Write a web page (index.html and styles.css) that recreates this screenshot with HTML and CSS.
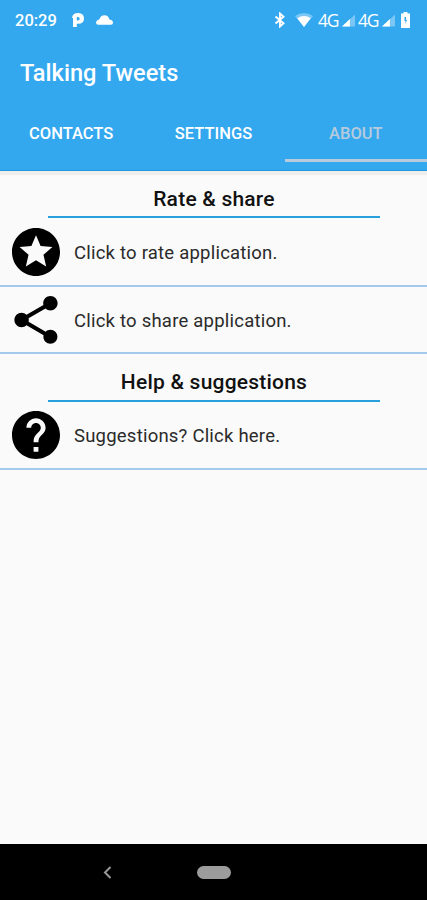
FILE: index.html
```html
<!DOCTYPE html>
<html lang="en">
<head>
  <meta charset="UTF-8">
  <meta name="viewport" content="width=device-width, initial-scale=1.0">
  <title>Talking Tweets</title>
  <link rel="stylesheet" href="styles.css">
</head>

<body>
  <div class="screen">
    <header class="app-bar">
      <div class="status-bar">
        <span class="clock">20:29</span>
        <svg class="icon-p" viewBox="0 0 12 14">
          <path fill-rule="evenodd" d="M0 5Q.5 0 6.200 0Q12 .3 12 5.500Q12 10.800 6 10.800H4.800V14H1V5ZM4.800 4V7.400H6A1.700 1.700 0 0 0 6 4Z"/>
        </svg>
        <svg class="icon-cloud" viewBox="0 0 18 10">
          <path d="M2.500 10Q0 10 0 7.600Q.3 5 3.300 4.600Q5 0 9 0Q13 0 14.300 4.500Q18 5 18 8Q18 10 15.800 10Z"/>
        </svg>
        <div class="status-icons">
          <svg class="icon-bluetooth" viewBox="0 0 12 16">
            <path d="M1.500 4.500L9.500 11.300L6 14.500V1.500L9.500 4.700L1.500 11.500" fill="none" stroke="currentColor" stroke-width="1.900"/>
          </svg>
          <svg class="icon-wifi" viewBox="0 0 18 14">
            <path d="M0 3Q9-3 18 3L9 14Z" opacity=".35"/>
            <path d="M2.300 5.200Q9 1 15.700 5.200L9 14Z"/>
          </svg>
          <span class="network">4G</span>
          <svg class="icon-signal" viewBox="0 0 14 13">
            <path d="M0 13L14 0V13Z" opacity=".35"/>
            <path d="M0 13L8.500 5V13Z"/>
          </svg>
          <span class="network">4G</span>
          <svg class="icon-signal" viewBox="0 0 14 13">
            <path d="M0 13L14 0V13Z" opacity=".35"/>
            <path d="M0 13L8.500 5V13Z"/>
          </svg>
          <svg class="icon-battery" viewBox="0 0 9 16">
            <path fill-rule="evenodd" d="M2.500 0h4v1.500H9V16H0V1.500h2.500ZM3.500 5v4h1V12L6 8H5V5Z"/>
          </svg>
        </div>
      </div>
      <h1 class="title">Talking Tweets</h1>
      <nav class="tabs">
        <a class="tab">CONTACTS</a>
        <a class="tab">SETTINGS</a>
        <a class="tab tab-active">ABOUT</a>
      </nav>
    </header>

    <main class="content">
      <h2 class="section-title">Rate &amp; share</h2>
      <div class="row">
        <svg class="row-icon" viewBox="2 2 20 20">
          <path d="M11.990 2C6.470 2 2 6.480 2 12s4.470 10 9.990 10C17.520 22 22 17.520 22 12S17.520 2 11.990 2zm4.240 16L12 15.450 7.770 18l1.120-4.810-3.730-3.230 4.920-.42L12 5l1.920 4.530 4.920.42-3.730 3.230L16.230 18z"/>
        </svg>
        <span class="row-text">Click to rate application.</span>
      </div>
      <div class="row row-share">
        <svg class="row-icon" viewBox="2 2 20 20">
          <path d="M18 16.080c-.76 0-1.440.3-1.960.77L8.910 12.700c.05-.23.09-.46.09-.7s-.04-.47-.09-.7l7.050-4.110c.54.5 1.250.81 2.040.81 1.660 0 3-1.340 3-3s-1.340-3-3-3-3 1.340-3 3c0 .24.04.47.09.7L8.040 9.810C7.500 9.310 6.790 9 6 9c-1.660 0-3 1.340-3 3s1.340 3 3 3c.79 0 1.500-.31 2.040-.81l7.120 4.160c-.05.21-.08.43-.08.65 0 1.610 1.310 2.920 2.920 2.920 1.610 0 2.920-1.310 2.920-2.920s-1.310-2.920-2.920-2.920z"/>
        </svg>
        <span class="row-text">Click to share application.</span>
      </div>
      <h2 class="section-title section-help">Help &amp; suggestions</h2>
      <div class="row row-help">
        <svg class="row-icon" viewBox="2 2 20 20">
          <path d="M12 2C6.480 2 2 6.480 2 12s4.480 10 10 10 10-4.480 10-10S17.520 2 12 2zm1 17h-2v-2h2v2zm2.070-7.750l-.9.920C13.450 12.900 13 13.500 13 15h-2v-.5c0-1.100.45-2.100 1.170-2.830l1.240-1.260c.37-.36.59-.86.59-1.410 0-1.100-.9-2-2-2s-2 .9-2 2H8c0-2.210 1.790-4 4-4s4 1.790 4 4c0 .88-.36 1.680-.93 2.250z" stroke="none"/>
        </svg>
        <span class="row-text">Suggestions? Click here.</span>
      </div>
    </main>

    <footer class="nav-bar">
      <svg class="nav-back" viewBox="0 0 9 13">
        <path d="M7.500 1L2 6.500L7.500 12" fill="none" stroke="currentColor" stroke-width="2"/>
      </svg>
      <span class="nav-home"></span>
    </footer>
  </div>
</body>
</html>
```

FILE: styles.css
```css
:root {
  --primary-color: #34a8ef;
  --primary-dark: #1e96dd;
  --bg-color: #fafafa;
  --divider-color: #a3c9ec;
  --tab-active: #b7cbdc;
}

* {
  margin: 0;
  padding: 0;
  box-sizing: border-box;
}

body {
  font-family: Roboto, "Liberation Sans", sans-serif;
  background-color: var(--bg-color);
  color: #111;
}

svg {
  display: block;
  flex-shrink: 0;
  fill: currentColor;
}

.screen {
  display: flex;
  flex-direction: column;
  height: 900px;
}

/* App bar */
.app-bar {
  height: 171px;
  background-color: var(--primary-color);
  color: #fff;
  border-bottom: 1px solid var(--primary-dark);
  box-shadow: 0 4px 1px #eeeeec;
}

.status-bar {
  display: flex;
  align-items: center;
  height: 40px;
  padding: 0 17px 0 15px;
}

.clock {
  width: 57px;
  font-size: 16.5px;
  font-weight: 500;
}

.icon-p {
  width: 12px;
  height: 14px;
}

.icon-cloud {
  width: 17px;
  height: 10px;
  margin-left: 12px;
}

.status-icons {
  display: flex;
  align-items: center;
  margin-left: auto;
}

.icon-bluetooth {
  width: 12px;
  height: 16px;
}

.icon-wifi {
  width: 18px;
  height: 14px;
  margin: 0 5px 0 9px;
}

.network {
  width: 24px;
  font-family: "Open Sans", sans-serif;
  font-size: 17.5px;
  letter-spacing: -1.2px;
}

.icon-signal {
  width: 13px;
  height: 13px;
  margin-right: 3px;
}

.icon-battery {
  width: 9px;
  height: 16px;
  margin-left: 3px;
}

.title {
  height: 66px;
  padding-left: 20px;
  font-size: 23.6px;
  font-weight: 500;
  line-height: 66px;
}

.tabs {
  display: flex;
  height: 56px;
}

.tab {
  flex: 1;
  font-size: 16.5px;
  font-weight: 500;
  line-height: 56px;
  text-align: center;
}

.tab-active {
  color: var(--tab-active);
  border-bottom: 3px solid var(--tab-active);
}

/* Content */
.content {
  flex: 1;
  padding-top: 10px;
}

.section-title {
  height: 37px;
  margin: 0 47px 0 48px;
  border-bottom: 2px solid #279fdc;
  font-size: 21px;
  font-weight: 500;
  letter-spacing: 0.22px;
  line-height: 36px;
  text-align: center;
}

.section-help {
  margin-top: 11px;
  line-height: 34px;
}

.row {
  display: flex;
  align-items: center;
  height: 69px;
  padding-left: 12px;
  border-bottom: 2px solid var(--divider-color);
}

.row-share {
  height: 67px;
}

.row-help {
  height: 68px;
}

.row-icon {
  width: 48px;
  height: 48px;
  margin-right: 14px;
  color: #000;
}

.row-text {
  padding-top: 2px;
  color: #2a2a2a;
  font-size: 18.5px;
  letter-spacing: 0.22px;
}

/* System navigation */
.nav-bar {
  display: flex;
  align-items: center;
  height: 56px;
  padding-left: 103px;
  background-color: #000;
  color: #999;
}

.nav-back {
  width: 9px;
  height: 13px;
}

.nav-home {
  width: 34px;
  height: 13px;
  margin-left: 85px;
  border-radius: 7px;
  background-color: #9c9c9c;
}
```
